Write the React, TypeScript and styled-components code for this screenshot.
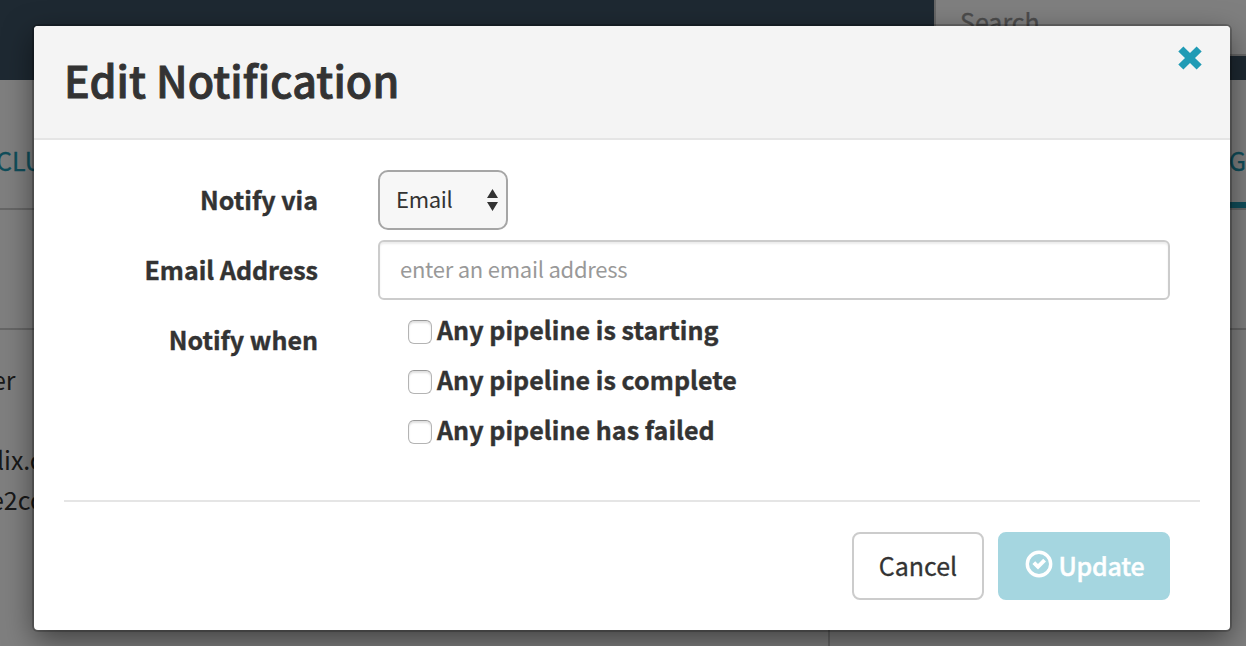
import React from 'react';
import styled, { createGlobalStyle } from 'styled-components';

const GlobalStyle = createGlobalStyle`
  * { box-sizing: border-box; }
  html, body, #root { height: 100%; }
  body {
    margin: 0;
    overflow: hidden;
    background: #fff;
    color: #333;
    font-family: "Noto Sans CJK SC", "Open Sans", sans-serif;
  }
  input, button { font-family: inherit; }
`;

const Page = styled.div`
  position: relative;
  height: 646px;
  display: flex;
  flex-direction: column;
  overflow: hidden;
`;

const TopBar = styled.header`
  height: 80px;
  flex: none;
  display: flex;
  justify-content: flex-end;
  align-items: flex-start;
  background: #3c5364;
`;

const SearchBox = styled.div`
  width: 312px;
  height: 56px;
  padding: 3px 24px;
  border: 2px solid #ccc;
  border-width: 0 0 2px 2px;
  background: #fff;
  color: #999;
  font-size: 25px;
  line-height: 36px;
  -webkit-text-stroke: 0.3px currentColor;
`;

const TabRow = styled.nav`
  height: 130px;
  flex: none;
  display: flex;
  justify-content: space-between;
  border-bottom: 2px solid #ccc;
`;

const Tab = styled.div<{ $active?: boolean; $shift?: number }>`
  height: 128px;
  padding-top: 62px;
  margin-left: ${p => p.$shift ?? 0}px;
  width: 60px;
  color: #209bb5;
  font-size: 25px;
  line-height: 36px;
  text-align: ${p => (p.$active ? 'right' : 'left')};
  white-space: nowrap;
  -webkit-text-stroke: 0.3px currentColor;
  border-bottom: ${p => (p.$active ? '6px solid #209bb5' : '0')};
`;

const Section = styled.div`
  height: 120px;
  flex: none;
  border-bottom: 2px solid #ccc;
`;

const Details = styled.div`
  flex: 1;
  width: 830px;
  border-right: 2px solid #ccc;
  padding-top: 29px;
`;

const DetailLine = styled.div<{ $shift: number }>`
  height: 40px;
  margin-left: ${p => p.$shift}px;
  font-size: 25px;
  line-height: 40px;
  white-space: nowrap;
`;

const Backdrop = styled.div`
  position: absolute;
  inset: 0;
  padding: 26px 16px 16px 34px;
  background: rgba(0, 0, 0, 0.5);
`;

const Dialog = styled.section`
  height: 604px;
  border-radius: 4px;
  background: #fff;
  box-shadow: 0 0 0 2px rgba(0, 0, 0, 0.2), 0 10px 30px rgba(0, 0, 0, 0.5);
`;

const DialogHeader = styled.div`
  height: 114px;
  display: flex;
  justify-content: space-between;
  align-items: flex-start;
  padding: 20px 28px 0 30px;
  border-bottom: 2px solid #e5e5e5;
  border-radius: 4px 4px 0 0;
  background: #f4f4f4;
`;

const Title = styled.h3`
  margin: 3px 0 0;
  font-size: 43px;
  font-weight: 500;
  line-height: 60px;
  letter-spacing: 0.1px;
  white-space: nowrap;
  -webkit-text-stroke: 0.9px currentColor;
`;

const CloseButton = styled.button`
  display: flex;
  padding: 0;
  border: 0;
  background: none;
  color: #209bb5;
`;

const Form = styled.div`
  height: 360px;
  padding: 30px 60px 0 30px;
  display: flex;
  flex-direction: column;
  gap: 10px;
`;

const Row = styled.div`
  display: grid;
  grid-template-columns: 254px 1fr;
  column-gap: 60px;
  align-items: start;
`;

const Label = styled.label`
  text-align: right;
  font-size: 25px;
  font-weight: 700;
  line-height: 58px;
  white-space: nowrap;
  -webkit-text-stroke: 0.4px currentColor;
`;

const Select = styled.div`
  width: 130px;
  height: 60px;
  display: flex;
  justify-content: space-between;
  align-items: center;
  padding: 0 8px 0 16px;
  border: 2px solid #a6a6a6;
  border-radius: 10px;
  background: #f7f7f7;
  font-size: 22px;
  letter-spacing: -0.3px;
`;

const SelectValue = styled.span`
  padding-bottom: 5px;
`;

const TextInput = styled.input`
  width: 100%;
  height: 60px;
  padding: 0 20px 5px;
  border: 2px solid #ccc;
  border-radius: 6px;
  background: #fff;
  box-shadow: inset 0 2px 2px rgba(0, 0, 0, 0.075);
  font-size: 22px;
  letter-spacing: -0.25px;
  outline: none;
  &::placeholder { color: #999; opacity: 1; }
`;

const Options = styled.div`
  display: flex;
  flex-direction: column;
  gap: 10px;
  padding-left: 30px;
`;

const Option = styled.label`
  height: 40px;
  display: flex;
  align-items: center;
  gap: 5px;
  font-size: 25px;
  font-weight: 700;
  line-height: 38px;
  letter-spacing: 0.05px;
  white-space: nowrap;
  -webkit-text-stroke: 0.4px currentColor;
`;

const OptionText = styled.span`
  padding-bottom: 2px;
`;

const Checkbox = styled.input`
  appearance: none;
  width: 24px;
  height: 24px;
  margin: 4px 0 0;
  border: 1px solid #b4b4b4;
  border-top-color: #999;
  border-radius: 6px;
  background: #fff;
  box-shadow: inset 0 2px 2px rgba(0, 0, 0, 0.12);
`;

const Footer = styled.div`
  height: 130px;
  margin: 0 30px;
  padding: 30px 30px 0 0;
  display: flex;
  justify-content: flex-end;
  gap: 14px;
  border-top: 2px solid #e5e5e5;
`;

const Button = styled.button<{ $primary?: boolean }>`
  width: ${p => (p.$primary ? 172 : 132)}px;
  height: 68px;
  display: flex;
  justify-content: center;
  align-items: center;
  gap: 6px;
  padding: 0 0 2px;
  border: 2px solid ${p => (p.$primary ? '#a5d6e0' : '#ccc')};
  border-radius: 8px;
  background: ${p => (p.$primary ? '#a5d6e0' : '#fff')};
  color: ${p => (p.$primary ? '#fff' : '#333')};
  font-size: 25px;
  font-weight: ${p => (p.$primary ? 500 : 400)};
  line-height: 36px;
  letter-spacing: ${p => (p.$primary ? '-0.25px' : '0')};
  -webkit-text-stroke: ${p => (p.$primary ? 0.4 : 0.3)}px currentColor;
  svg { margin: -3px 0 0 1px; }
`;

const events = ['Any pipeline is starting', 'Any pipeline is complete', 'Any pipeline has failed'];

export default function App() {
  return (
    <>
      <GlobalStyle />
      <Page>
        <TopBar>
          <SearchBox>Search</SearchBox>
        </TopBar>
        <TabRow>
          <Tab $shift={-4}>CLUS</Tab>
          <Tab $active>G</Tab>
        </TabRow>
        <Section />
        <Details>
          <DetailLine $shift={-8}>er</DetailLine>
          <DetailLine $shift={0} />
          <DetailLine $shift={-3}>lix.com</DetailLine>
          <DetailLine $shift={-10}>e2core</DetailLine>
        </Details>
        <Backdrop>
          <Dialog role="dialog" aria-label="Edit Notification">
            <DialogHeader>
              <Title>Edit Notification</Title>
              <CloseButton aria-label="Close">
                <svg width="24" height="24" viewBox="0 0 24 24" fill="currentColor">
                  <path d="M5.4.4 12 7 18.6.4 23.7 5.4 17 12 23.7 18.6 18.6 23.6 12 17 5.4 23.6.3 18.6 7 12 .3 5.4Z" />
                </svg>
              </CloseButton>
            </DialogHeader>
            <Form>
              <Row>
                <Label>Notify via</Label>
                <Select>
                  <SelectValue>Email</SelectValue>
                  <svg width="11" height="22" viewBox="0 0 11 22" fill="#333">
                    <path d="M5.5 0 11 9H0ZM0 13H11L5.5 22Z" />
                  </svg>
                </Select>
              </Row>
              <Row>
                <Label>Email Address</Label>
                <TextInput placeholder="enter an email address" />
              </Row>
              <Row>
                <Label>Notify when</Label>
                <Options>
                  {events.map(e => (
                    <Option key={e}>
                      <Checkbox type="checkbox" />
                      <OptionText>{e}</OptionText>
                    </Option>
                  ))}
                </Options>
              </Row>
            </Form>
            <Footer>
              <Button>Cancel</Button>
              <Button $primary>
                <svg width="28" height="28" viewBox="0 0 28 28" fill="currentColor">
                  <circle cx="14" cy="14" r="11.7" fill="none" stroke="currentColor" strokeWidth="3.4" />
                  <path d="M7.4 14 10.2 11.2 13 13.9 18.2 8.8 21 11.6 13 19.6Z" />
                </svg>
                Update
              </Button>
            </Footer>
          </Dialog>
        </Backdrop>
      </Page>
    </>
  );
}
